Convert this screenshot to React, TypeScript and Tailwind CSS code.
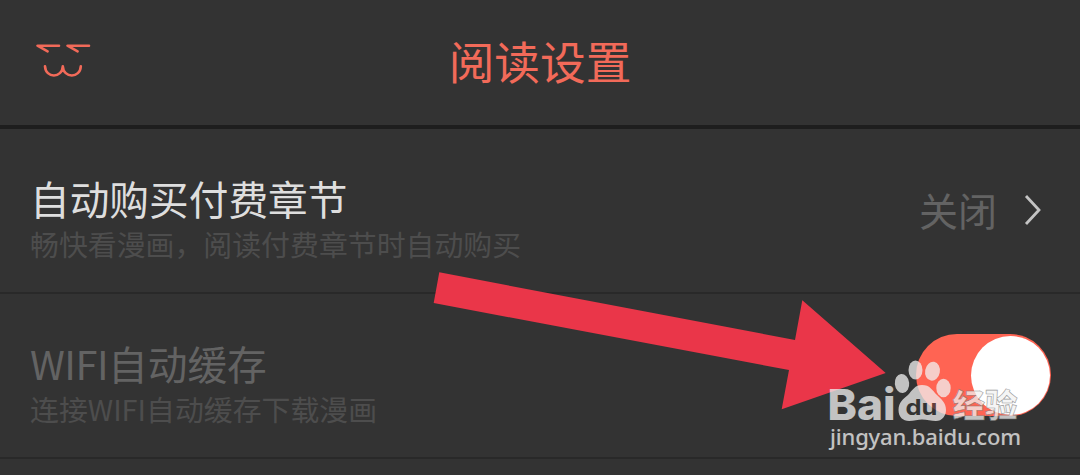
import type { ReactNode } from 'react'

interface SettingRowProps {
  title: ReactNode
  hint: string
  muted?: boolean
  children: ReactNode
}

function FaceIcon() {
  return (
    <svg
      className="h-[40px] w-[60px]"
      viewBox="0 0 60 40"
      fill="none"
      stroke="#f26a59"
      strokeWidth="2.6"
      strokeLinecap="round"
      strokeLinejoin="round">
      <path d="M14.6 11.3 L4.500 5.7 H26" />
      <path d="M44.6 11.3 L34.500 5.7 H56" />
      <path d="M12 26.3 C12.500 38.5 29.300 38.5 29.800 26.3 C30.300 38.5 47.300 38.5 47.800 26.3" />
    </svg>
  )
}

function SettingRow({ title, hint, muted, children }: SettingRowProps) {
  return (
    <div className="flex h-[165px] items-start justify-between border-b-2 border-[#292929] pl-[30px]">
      <div className="pt-[46px] whitespace-nowrap">
        <h2
          className={`text-[39.7px] leading-[46px] ${muted ? 'text-[#636363]' : 'text-[#dedede]'}`}>
          {title}
        </h2>
        <p className="mt-[4px] text-[28.9px] leading-[36px] text-[#4d4d4d]">{hint}</p>
      </div>
      {children}
    </div>
  )
}

function Toggle() {
  return (
    <button className="mt-[40px] mr-[29px] flex h-[82px] w-[135px] items-center justify-end rounded-full bg-[#ff6453] pr-px">
      <span className="size-[79px] rounded-full bg-white" />
    </button>
  )
}

function Arrow() {
  return (
    <svg
      className="absolute top-[265px] left-[430px] h-[150px] w-[460px]"
      viewBox="430 265 460 150">
      <polygon
        fill="#ea3649"
        points="439.3,272.3 795,340 802.3,300.3 885.7,373 781.7,409.3 789,370 433.7,303"
      />
    </svg>
  )
}

function Watermark() {
  return (
    <svg
      className="absolute top-[350px] left-[820px] h-[110px] w-[210px] opacity-75"
      viewBox="820 350 210 110"
      fill="#f2f2f2">
      <ellipse cx="902" cy="383.5" rx="7.2" ry="9.5" transform="rotate(-6 902 383.5)" />
      <ellipse cx="915.5" cy="370" rx="7" ry="9.6" />
      <ellipse cx="932.5" cy="371.2" rx="7.4" ry="9.5" transform="rotate(10 932.5 371.2)" />
      <ellipse cx="943.5" cy="388" rx="7.2" ry="9.3" />
      <path d="M922 385 C915 385 912.5 390 908 395 C903 399.5 898.5 402 898.5 410 C898.5 417 903 421 909 421 C914 421 918 419.5 922 419.5 C927 419.5 931 421 936 421 C942 421 946 416 946 410 C946 402 941 399.5 937 395 C932 390 930 385 922 385 Z" />
      <text
        x="905.5"
        y="415"
        fill="#343434"
        fontFamily="Inter, sans-serif"
        fontWeight="700"
        fontSize="22"
        textLength="32"
        lengthAdjust="spacingAndGlyphs">
        du
      </text>
      <text
        x="827.5"
        y="419.5"
        fontFamily="Inter, sans-serif"
        fontWeight="800"
        fontSize="43"
        textLength="68"
        lengthAdjust="spacingAndGlyphs">
        Bai
      </text>
      <text
        x="952.5"
        y="416.8"
        fontFamily="'Noto Sans CJK SC', sans-serif"
        fontWeight="900"
        fontSize="32"
        stroke="#777777"
        strokeWidth="0.6"
        textLength="65"
        lengthAdjust="spacingAndGlyphs">
        经验
      </text>
      <text
        x="830"
        y="445"
        fontFamily="'Noto Sans', sans-serif"
        fontWeight="500"
        fontSize="22"
        textLength="191"
        lengthAdjust="spacing">
        jingyan.baidu.com
      </text>
    </svg>
  )
}

export default function App() {
  return (
    <div className="relative h-[475px] w-[1080px] overflow-hidden bg-[#333333] font-['Noto_Sans_CJK_SC',sans-serif]">
      <header className="grid h-[129px] grid-cols-[1fr_auto_1fr] items-start border-b-4 border-[#1e1e1e]">
        <div className="pt-[40px] pl-[33px]">
          <FaceIcon />
        </div>
        <h1 className="pt-[33px] text-[45.7px] leading-[54px] text-[#f26a59]">阅读设置</h1>
      </header>

      <SettingRow title="自动购买付费章节" hint="畅快看漫画，阅读付费章节时自动购买">
        <div className="flex items-center pt-[57px] pr-[38px]">
          <span className="text-[39px] leading-[46px] text-[#636363]">关闭</span>
          <svg
            className="ml-[27px] h-[32px] w-[18px]"
            viewBox="0 0 18 32"
            fill="none"
            stroke="#c4c4c4"
            strokeWidth="2.8">
            <path d="M2 3 L15 17 L2 31" />
          </svg>
        </div>
      </SettingRow>

      <SettingRow
        title={
          <>
            <span className="tracking-[-0.5px]">WIFI</span>自动缓存
          </>
        }
        hint="连接WIFI自动缓存下载漫画"
        muted>
        <Toggle />
      </SettingRow>

      <Arrow />
      <Watermark />
    </div>
  )
}
